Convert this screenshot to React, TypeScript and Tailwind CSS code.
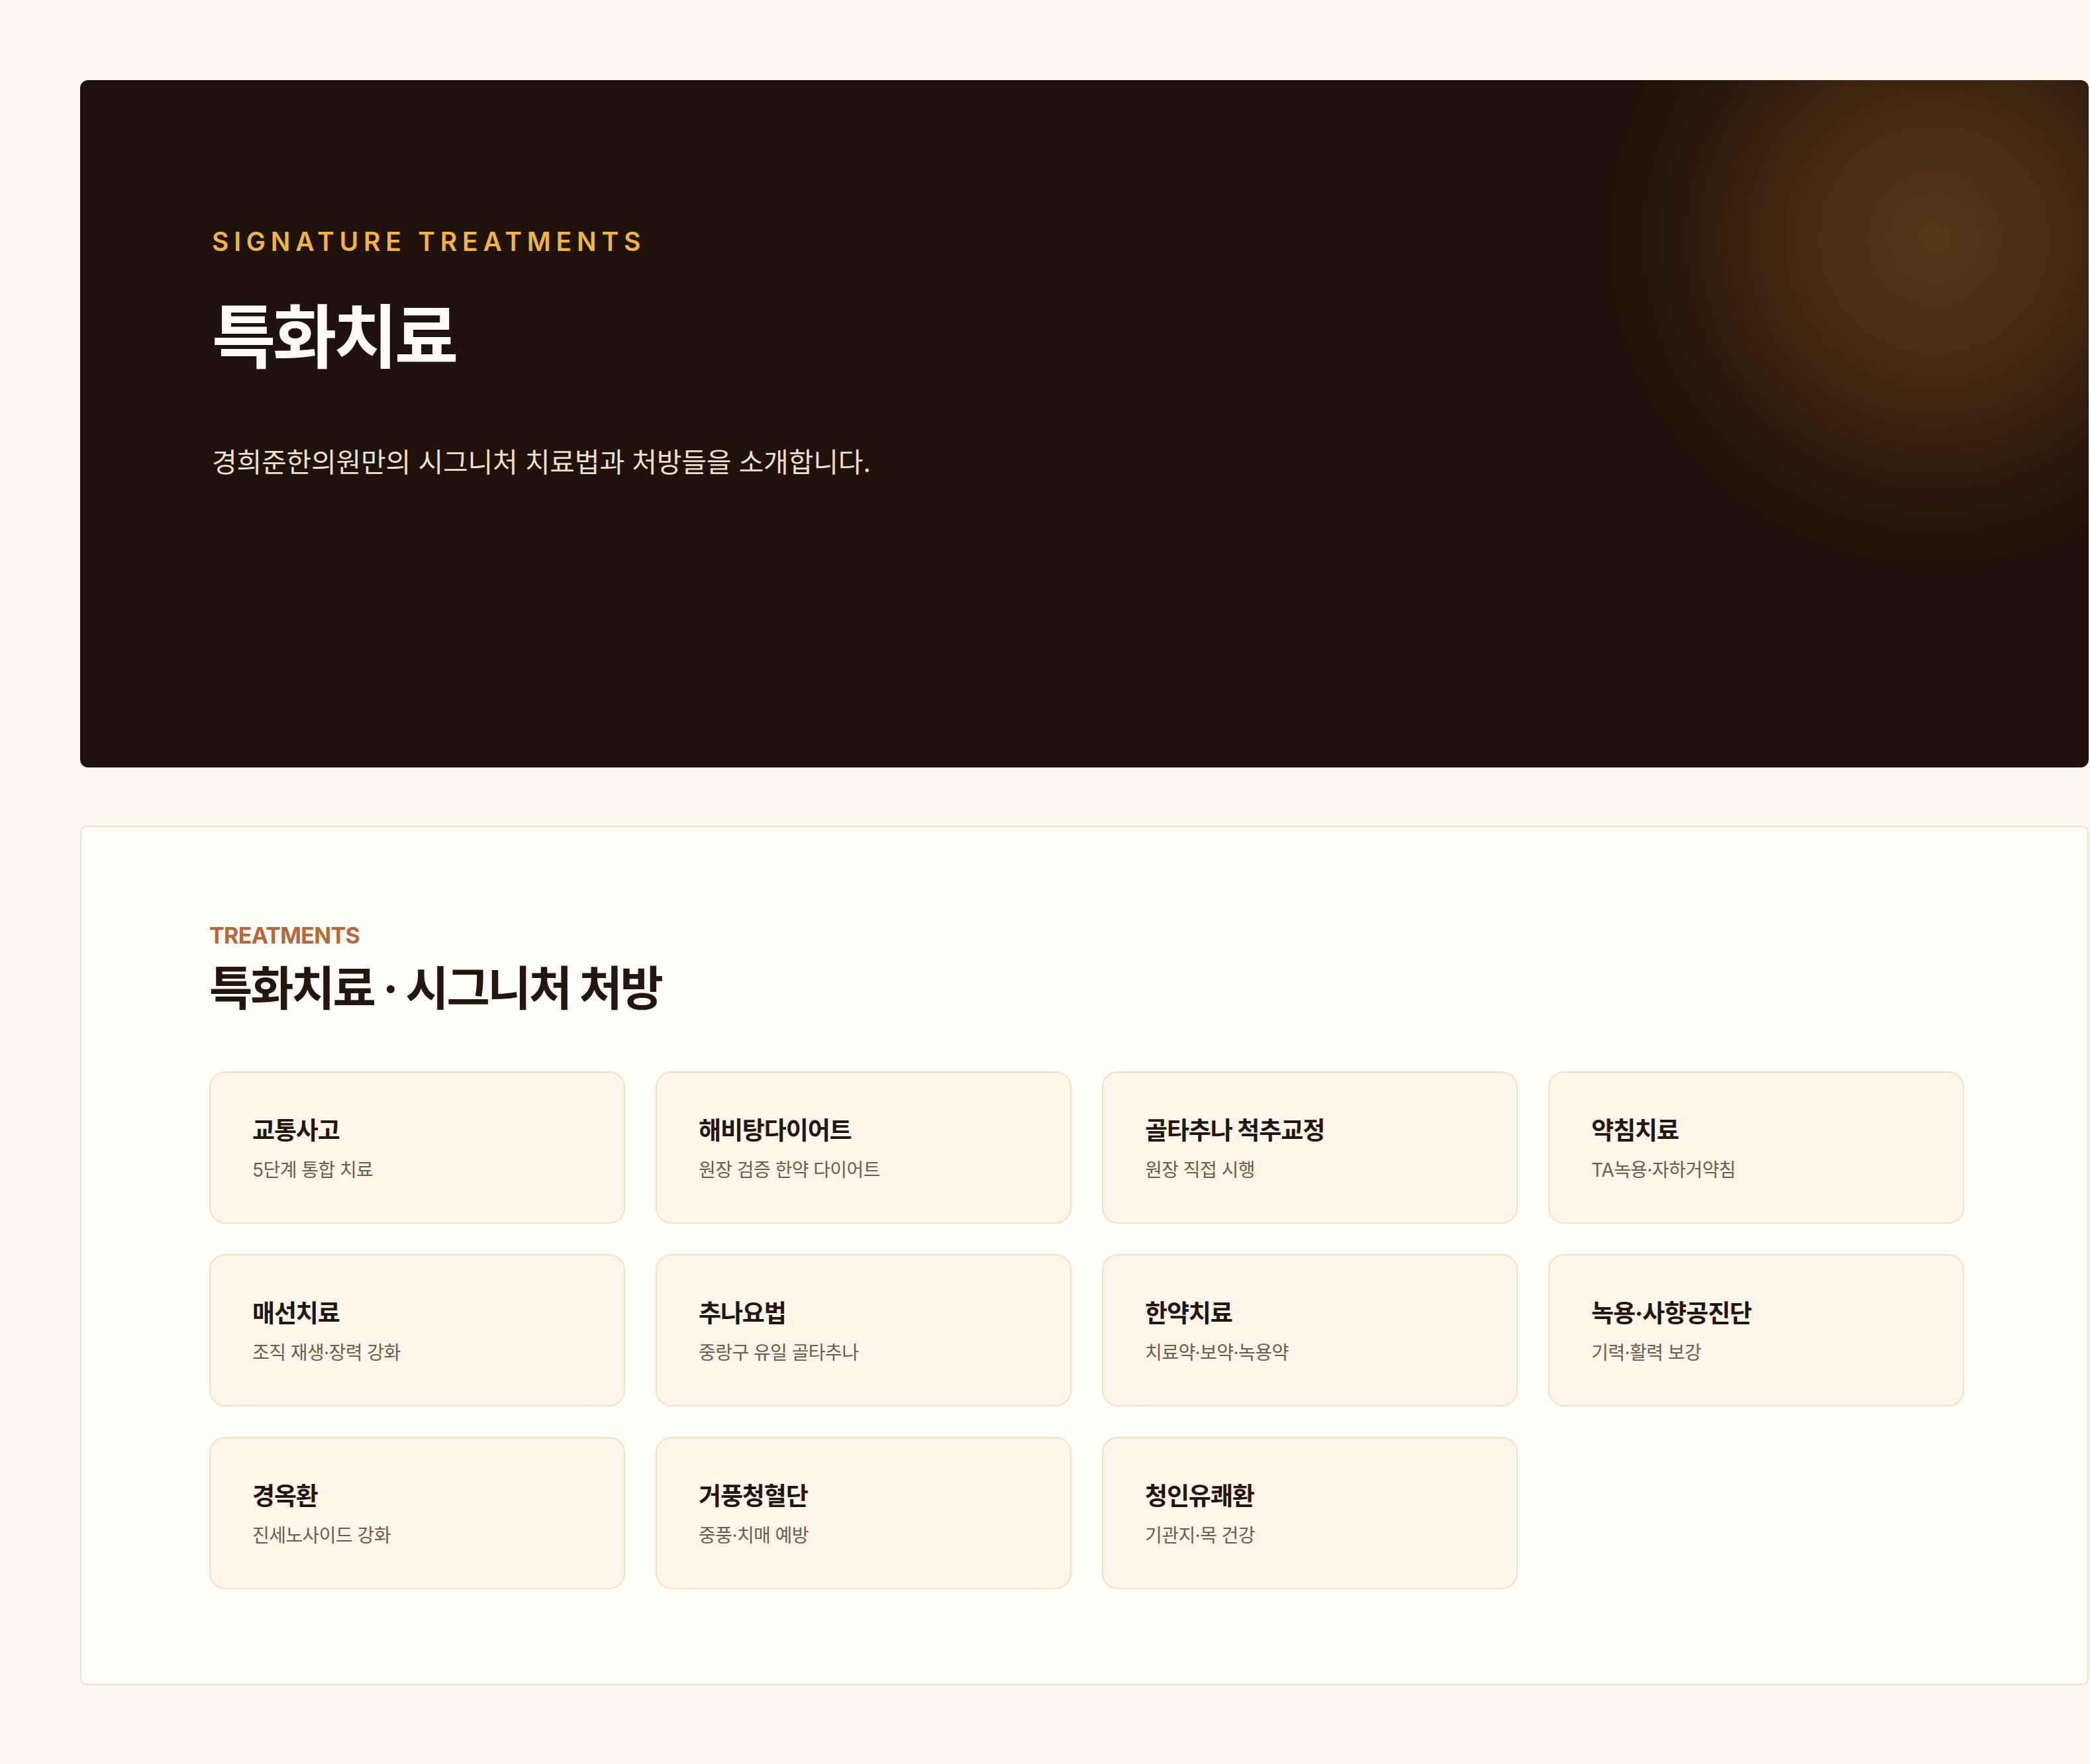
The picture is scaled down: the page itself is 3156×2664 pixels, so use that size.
import React from "react";

type Treatment = {
    name: string;
    desc: string;
};

const treatments: Treatment[] = [
    { name: "교통사고", desc: "5단계 통합 치료" },
    { name: "해비탕다이어트", desc: "원장 검증 한약 다이어트" },
    { name: "골타추나 척추교정", desc: "원장 직접 시행" },
    { name: "약침치료", desc: "TA녹용·자하거약침" },
    { name: "매선치료", desc: "조직 재생·장력 강화" },
    { name: "추나요법", desc: "중랑구 유일 골타추나" },
    { name: "한약치료", desc: "치료약·보약·녹용약" },
    { name: "녹용·사향공진단", desc: "기력·활력 보강" },
    { name: "경옥환", desc: "진세노사이드 강화" },
    { name: "거풍청혈단", desc: "중풍·치매 예방" },
    { name: "청인유쾌환", desc: "기관지·목 건강" },
];

function TreatmentCard({ item }: { item: Treatment }) {
    return (
        <div className="h-[230px] rounded-[24px] border-2 border-[#f3e2c4] bg-[#fff5ea] px-[63px] pt-[64px]">
            <h3 className="text-[37px] font-bold leading-[1.3] tracking-[-0.03em] text-[#24160c]">{item.name}</h3>
            <p className="mt-[16px] text-[28px] leading-[1.4] tracking-[-0.02em] text-[#6f5b48]">{item.desc}</p>
        </div>
    );
}

export default function App() {
    return (
        <div className="min-h-screen w-[3156px] bg-[#fcf7f1] pl-[121px] pr-[2px] pt-[121px] pb-[120px] font-['Inter','Noto_Sans_CJK_KR',sans-serif]">
            {/* hero */}
            <section className="h-[1038px] rounded-[12px] bg-[#1e120a] bg-[radial-gradient(circle_500px_at_2800px_240px,#573719_0%,#4c2e15_28%,#3d2511_52%,#2a180c_78%,#1e120a_100%)] pl-[199px] pt-[224px]">
                <p className="text-[39px] font-semibold leading-none tracking-[0.2em] text-[#f2b441]">SIGNATURE TREATMENTS</p>
                <h1 className="mt-[62px] text-[105px] font-bold leading-[1.2] tracking-[-0.045em] text-[#fffaf3]">특화치료</h1>
                <p className="mt-[98px] text-[41px] leading-[1.4] tracking-[-0.005em] text-[#eedfc9]">경희준한의원만의 시그니처 치료법과 처방들을 소개합니다.</p>
            </section>

            {/* treatment list */}
            <section className="mt-[88px] rounded-[10px] border-2 border-[#f1e3c9] bg-[#fffdf9] px-[193px] pt-[144px] pb-[143px]">
                <p className="text-[34px] font-bold leading-[1.2] tracking-[-0.02em] text-[#b5693b]">TREATMENTS</p>
                <h2 className="mt-[12px] text-[71px] font-bold leading-[1.3] tracking-[-0.045em] text-[#24160c]">특화치료 · 시그니처 처방</h2>
                <div className="mt-[80px] grid w-[2650px] grid-cols-4 gap-[46px]">
                    {treatments.map(item => (
                        <TreatmentCard key={item.name} item={item} />
                    ))}
                </div>
            </section>
        </div>
    );
}
